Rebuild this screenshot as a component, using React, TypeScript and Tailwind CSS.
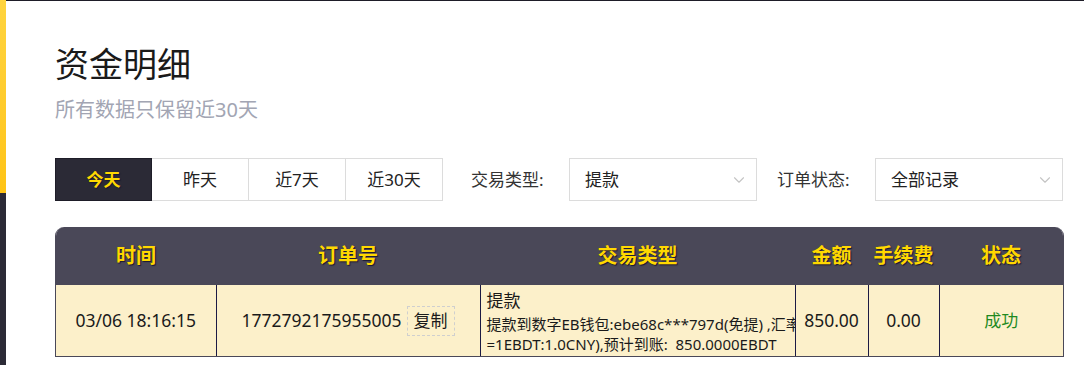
import React from "react";
import { ChevronDown } from "lucide-react";

const FONT = "font-['Noto_Sans','Noto_Sans_CJK_SC',sans-serif]";
const YELLOW_TITLE = "font-bold text-[#ffd800] [text-shadow:1px_1px_1px_#1a1830]";

const ranges = ["今天", "昨天", "近7天", "近30天"];

function FilterSelect({ label, value }: { label: string; value: string }) {
  return (
    <div className="flex items-center">
      <span className="w-[98px] text-[17px] text-[#333]">{label}</span>
      <div className="flex h-[43px] w-[188px] items-center justify-between border border-[#dcdcdc] bg-white pr-[8px] pl-[15px]">
        <span className="text-[17px] text-[#222]">{value}</span>
        <ChevronDown size={18} strokeWidth={1.5} className="text-[#c4c4c4]" />
      </div>
    </div>
  );
}

export default function App() {
  return (
    <div className={`flex h-[365px] w-[1084px] overflow-hidden bg-white ${FONT}`}>
      <div className="flex w-[6px] shrink-0 flex-col">
        <div className="h-[193px] bg-gradient-to-b from-[#ffd43e] to-[#ffc414]"></div>
        <div className="flex-1 bg-[#2b2a36]"></div>
      </div>

      <div className="flex-1 border-t border-[#1e1d28] pl-[49px]">
        <h1 className="pt-[43px] text-[34px] leading-[40px] text-[#1a1a1a]">资金明细</h1>
        <p className="mt-[12px] text-[20px] leading-[28px] text-[#a2a5b3]">所有数据只保留近30天</p>

        <div className="mt-[34px] flex items-center">
          <div className="flex">
            {ranges.map((r, i) => (
              <div
                key={r}
                className={`flex h-[43px] w-[97px] items-center justify-center text-[17px] ${
                  i === 0 ? `border border-[#1e1d28] bg-[#2b2a36] ${YELLOW_TITLE}` : "border-y border-r border-[#dcdcdc] text-[#222]"
                }`}
              >
                {r}
              </div>
            ))}
          </div>
          <div className="ml-[28px] flex gap-[20px]">
            <FilterSelect label="交易类型:" value="提款" />
            <FilterSelect label="订单状态:" value="全部记录" />
          </div>
        </div>

        <div className="mt-[26px] w-[1009px] overflow-hidden rounded-t-[9px] border-x border-b border-[#4a4858]">
          <table className="w-full table-fixed border-collapse">
            <colgroup>
              <col className="w-[160px]" />
              <col className="w-[264px]" />
              <col className="w-[315px]" />
              <col className="w-[73px]" />
              <col className="w-[71px]" />
              <col />
            </colgroup>
            <thead>
              <tr className="h-[58px] bg-[#4a4858] text-[20px]">
                {["时间", "订单号", "交易类型", "金额", "手续费", "状态"].map((h) => (
                  <th key={h} className={`${YELLOW_TITLE} text-center`}>
                    {h}
                  </th>
                ))}
              </tr>
            </thead>
            <tbody>
              <tr className="h-[71px] bg-[#fcf0ca] text-[17.5px] text-[#1a1a1a]">
                <td className="text-center">03/06 18:16:15</td>
                <td className="border-l border-[#1c1a44] text-center">
                  <span>1772792175955005</span>
                  <span className="ml-[5px] inline-block border border-dashed border-[#cfcfcf] px-[6px] text-[17px] leading-[28px]">复制</span>
                </td>
                <td className="overflow-hidden border-l border-[#1c1a44] pl-[6px] align-middle">
                  <div className="text-[17px] leading-[26px]">提款</div>
                  <div className="text-[15px] leading-[20px] whitespace-nowrap">提款到数字EB钱包:ebe68c***797d(免提) ,汇率</div>
                  <div className="text-[15px] leading-[20px] whitespace-nowrap">=1EBDT:1.0CNY),预计到账:&nbsp;&nbsp;850.0000EBDT</div>
                </td>
                <td className="border-l border-[#1c1a44] text-center">850.00</td>
                <td className="border-l border-[#1c1a44] text-center">0.00</td>
                <td className="border-l border-[#1c1a44] text-center text-[17px] text-[#1f8a1f]">成功</td>
              </tr>
            </tbody>
          </table>
        </div>
      </div>
    </div>
  );
}
